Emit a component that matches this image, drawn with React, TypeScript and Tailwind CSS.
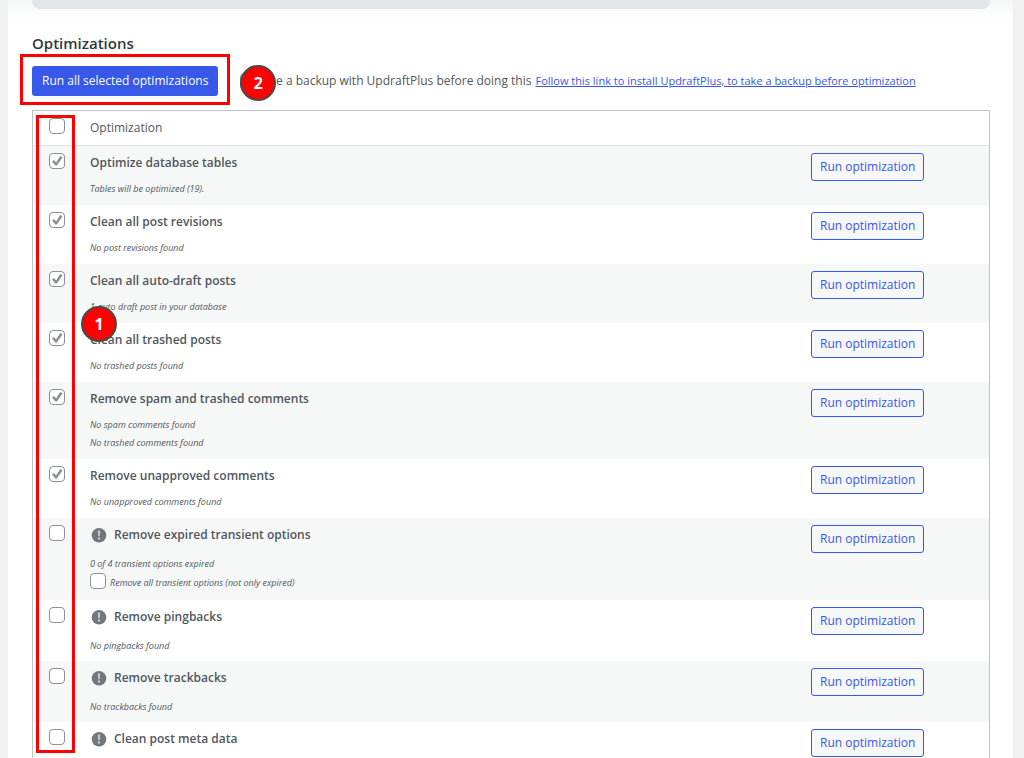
import { useState } from "react"

type Item = {
  id: string
  title: string
  notes: string[]
  checked?: boolean
  warning?: boolean
  option?: string
}

const items: Item[] = [
  { id: "tables", title: "Optimize database tables", notes: ["Tables will be optimized (19)."], checked: true },
  { id: "revisions", title: "Clean all post revisions", notes: ["No post revisions found"], checked: true },
  { id: "autodraft", title: "Clean all auto-draft posts", notes: ["1 auto draft post in your database"], checked: true },
  { id: "trash", title: "Clean all trashed posts", notes: ["No trashed posts found"], checked: true },
  {
    id: "spam",
    title: "Remove spam and trashed comments",
    notes: ["No spam comments found", "No trashed comments found"],
    checked: true,
  },
  { id: "unapproved", title: "Remove unapproved comments", notes: ["No unapproved comments found"], checked: true },
  {
    id: "transient",
    title: "Remove expired transient options",
    notes: ["0 of 4 transient options expired"],
    warning: true,
    option: "Remove all transient options (not only expired)",
  },
  { id: "pingbacks", title: "Remove pingbacks", notes: ["No pingbacks found"], warning: true },
  { id: "trackbacks", title: "Remove trackbacks", notes: ["No trackbacks found"], warning: true },
  { id: "postmeta", title: "Clean post meta data", notes: [], warning: true },
]

function Checkbox({ id, label, checked, onChange }: { id: string; label?: string; checked: boolean; onChange: () => void }) {
  return (
    <span className="relative block size-4 shrink-0">
      <input
        id={id}
        type="checkbox"
        aria-label={label}
        checked={checked}
        onChange={onChange}
        className="block size-4 appearance-none rounded-[4px] border border-[#8c8f94] bg-white"
      />
      {checked && (
        <svg viewBox="0 0 16 16" className="pointer-events-none absolute inset-0 size-4">
          <path d="M3 8.4 5.1 7.1 7.1 9.4 11.2 3.1 13.6 4.2 7.9 12.6 6.4 12.6Z" fill="#8c8f94" />
        </svg>
      )}
    </span>
  )
}

function WarningIcon() {
  return (
    <svg viewBox="0 0 16 16" className="mx-px size-4 shrink-0">
      <circle cx="8" cy="8.3" r="7.3" fill="#72777c" />
      <path d="M6.8 3.5h2.4L8.8 9.2H7.2Z" fill="#c6cacd" />
      <circle cx="8" cy="11.5" r="1.2" fill="#c6cacd" />
    </svg>
  )
}

function Marker({ n }: { n: number }) {
  return (
    <span className="flex size-9 items-center justify-center rounded-full border-2 border-[#4a4a4a] bg-[#ff0000] text-base font-bold text-white">
      {n}
    </span>
  )
}

export default function App() {
  const [selected, setSelected] = useState<string[]>(items.filter((i) => i.checked).map((i) => i.id))
  const [allTransients, setAllTransients] = useState(false)

  function toggle(id: string) {
    setSelected((s) => (s.includes(id) ? s.filter((x) => x !== id) : [...s, id]))
  }

  function toggleAll() {
    setSelected((s) => (s.length === items.length ? [] : items.map((i) => i.id)))
  }

  return (
    <div className="h-screen overflow-hidden bg-[#f0f0f1] pr-[11px] pl-2 font-['Open_Sans',sans-serif] text-[12px] text-[#50575e]">
      <main className="min-h-full bg-white bg-linear-to-b from-[#f4f5f5] to-white to-[20px] pr-[23px] pl-6">
        <div className="h-[9px] rounded-b-lg bg-[#e4e5e8]" />

        <h3 className="mt-6 text-[15px] leading-5 font-semibold text-[#32373c]">Optimizations</h3>

        <div className="mt-[13px] flex items-center">
          <div className="relative">
            <button className="block h-[30px] rounded-[3px] bg-[#3858e9] px-[10px] whitespace-nowrap text-white">
              Run all selected optimizations
            </button>
            <div className="pointer-events-none absolute -inset-x-3 -top-3 -bottom-[9px] border-3 border-[#ff0000]" />
          </div>
          <div className="relative ml-[22px] flex items-center">
            <input type="checkbox" id="backup" className="size-4 appearance-none rounded-[4px] border border-[#8c8f94]" />
            <label htmlFor="backup">Take a backup with UpdraftPlus before doing this</label>
            <a href="#updraftplus" className="ml-1 text-[11px] text-[#3858e9] underline">
              Follow this link to install UpdraftPlus, to take a backup before optimization
            </a>
            <div className="absolute -top-[7px] left-0">
              <Marker n={2} />
            </div>
          </div>
        </div>

        <div className="relative mt-[14px] border border-[#c3c4c7]">
          <table className="w-full border-collapse">
            <thead>
              <tr className="border-b border-[#e4e6e6]">
                <th className="w-[57px] pt-[7px] pl-4 align-top">
                  <Checkbox
                    id="all"
                    label="Select all"
                    checked={selected.length === items.length}
                    onChange={toggleAll}
                  />
                </th>
                <th className="py-[7px] text-left leading-5 font-normal">Optimization</th>
                <th className="w-[178px]"></th>
              </tr>
            </thead>
            <tbody>
              {items.map((item) => (
                <tr key={item.id} className="align-top odd:bg-[#f6f8f7]">
                  <td className="pt-[7px] pl-4">
                    <Checkbox id={item.id} checked={selected.includes(item.id)} onChange={() => toggle(item.id)} />
                  </td>
                  <td className={item.warning ? "pt-[7px] pb-[6px]" : "py-[7px]"}>
                    <label htmlFor={item.id} className="flex items-center gap-[6px] leading-5 font-semibold">
                      {item.warning && <WarningIcon />}
                      {item.title}
                    </label>
                    <div className={item.warning ? "mt-[10px] text-[9px] italic" : "mt-[7px] text-[9px] italic"}>
                      {item.notes.map((note) => (
                        <p key={note} className="leading-[18px]">
                          {note}
                        </p>
                      ))}
                      {item.option && (
                        <div className="flex h-[21px] items-start gap-1">
                          <Checkbox
                            id="all-transients"
                            checked={allTransients}
                            onChange={() => setAllTransients(!allTransients)}
                          />
                          <label htmlFor="all-transients" className="leading-5">
                            {item.option}
                          </label>
                        </div>
                      )}
                    </div>
                  </td>
                  <td className="pt-[7px]">
                    <button className="block h-7 rounded-[3px] border border-[#3858e9] bg-[#f6f7f7] px-2 whitespace-nowrap text-[#3858e9]">
                      Run optimization
                    </button>
                  </td>
                </tr>
              ))}
            </tbody>
          </table>

          <div className="pointer-events-none absolute top-1 bottom-3 left-[3px] w-[39px] border-3 border-[#ff0000]" />
          <div className="absolute top-[195px] left-12">
            <Marker n={1} />
          </div>
        </div>
      </main>
    </div>
  )
}
